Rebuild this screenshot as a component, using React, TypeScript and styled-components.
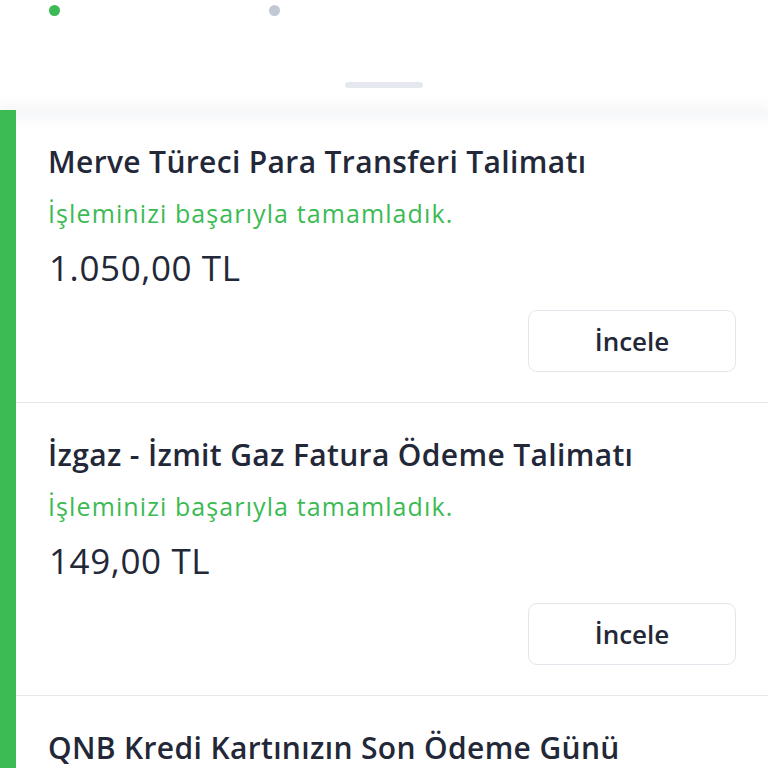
import styled, { createGlobalStyle } from 'styled-components';

const GlobalStyle = createGlobalStyle`
  html, body {
    margin: 0;
    padding: 0;
    background: #ffffff;
    overflow: hidden;
  }
  body {
    font-family: 'Open Sans', Lato, sans-serif;
    color: #232838;
  }
`;

const Page = styled.div`
  width: 768px;
  height: 768px;
  overflow: hidden;
  display: flex;
  flex-direction: column;
`;

const Header = styled.div`
  height: 110px;
  flex-shrink: 0;
  display: flex;
  flex-direction: column;
  align-items: center;
`;

const DotsRow = styled.div`
  width: 100%;
  height: 26px;
  position: relative;
  margin-top: -2px;
`;

const Dot = styled.span<{ $active?: boolean; $left: number }>`
  position: absolute;
  top: 7px;
  left: ${(p) => p.$left}px;
  width: 11px;
  height: 11px;
  border-radius: 50%;
  background: ${(p) => (p.$active ? '#3cba54' : '#c3c8d6')};
`;

const Handle = styled.div`
  margin-top: 58px;
  width: 78px;
  height: 6px;
  border-radius: 3px;
  background: #e5e8ee;
`;

const Panel = styled.div`
  flex: 1;
  display: flex;
  box-shadow: 0 -4px 14px rgba(30, 40, 70, 0.05);
`;

const GreenBar = styled.div`
  width: 16px;
  flex-shrink: 0;
  background: #3cba54;
`;

const List = styled.div`
  flex: 1;
  display: flex;
  flex-direction: column;
  background: linear-gradient(#f6f7f9, #ffffff 20px);
`;

const Card = styled.div`
  height: 293px;
  flex-shrink: 0;
  box-sizing: border-box;
  border-bottom: 1px solid #e6e8ec;
  padding: 34px 32px 0 32px;
  display: flex;
  flex-direction: column;
`;

const Title = styled.div`
  font-size: 30px;
  font-weight: 600;
  line-height: 36px;
  letter-spacing: 0.35px;
  color: #232838;
  white-space: nowrap;
`;

const Status = styled.div`
  margin-top: 18px;
  font-size: 25px;
  line-height: 30px;
  letter-spacing: 1.1px;
  color: #3cba54;
`;

const Amount = styled.div`
  margin-top: 20px;
  font-size: 35px;
  line-height: 40px;
  letter-spacing: 0.6px;
  color: #232838;
  padding-left: 1px;
`;

const Actions = styled.div`
  display: flex;
  justify-content: flex-end;
  margin-top: 22px;
`;

const ReviewButton = styled.button`
  width: 208px;
  height: 62px;
  box-sizing: border-box;
  border: 1.5px solid #e3e6ec;
  border-radius: 9px;
  background: #ffffff;
  font-family: 'Open Sans', Lato, sans-serif;
  font-size: 26px;
  font-weight: 600;
  color: #232838;
  cursor: pointer;
`;

type Item = { title: string; status?: string; amount?: string };

const items: Item[] = [
  {
    title: 'Merve Türeci Para Transferi Talimatı',
    status: 'İşleminizi başarıyla tamamladık.',
    amount: '1.050,00 TL',
  },
  {
    title: 'İzgaz - İzmit Gaz Fatura Ödeme Talimatı',
    status: 'İşleminizi başarıyla tamamladık.',
    amount: '149,00 TL',
  },
  { title: 'QNB Kredi Kartınızın Son Ödeme Günü' },
];

function App() {
  return (
    <Page>
      <GlobalStyle />
      <Header>
        <DotsRow>
          <Dot $active $left={49} />
          <Dot $left={269} />
        </DotsRow>
        <Handle />
      </Header>
      <Panel>
        <GreenBar />
        <List>
          {items.map((item) => (
            <Card key={item.title}>
              <Title>{item.title}</Title>
              {item.status && <Status>{item.status}</Status>}
              {item.amount && <Amount>{item.amount}</Amount>}
              {item.amount && (
                <Actions>
                  <ReviewButton>İncele</ReviewButton>
                </Actions>
              )}
            </Card>
          ))}
        </List>
      </Panel>
    </Page>
  );
}

export default App;
